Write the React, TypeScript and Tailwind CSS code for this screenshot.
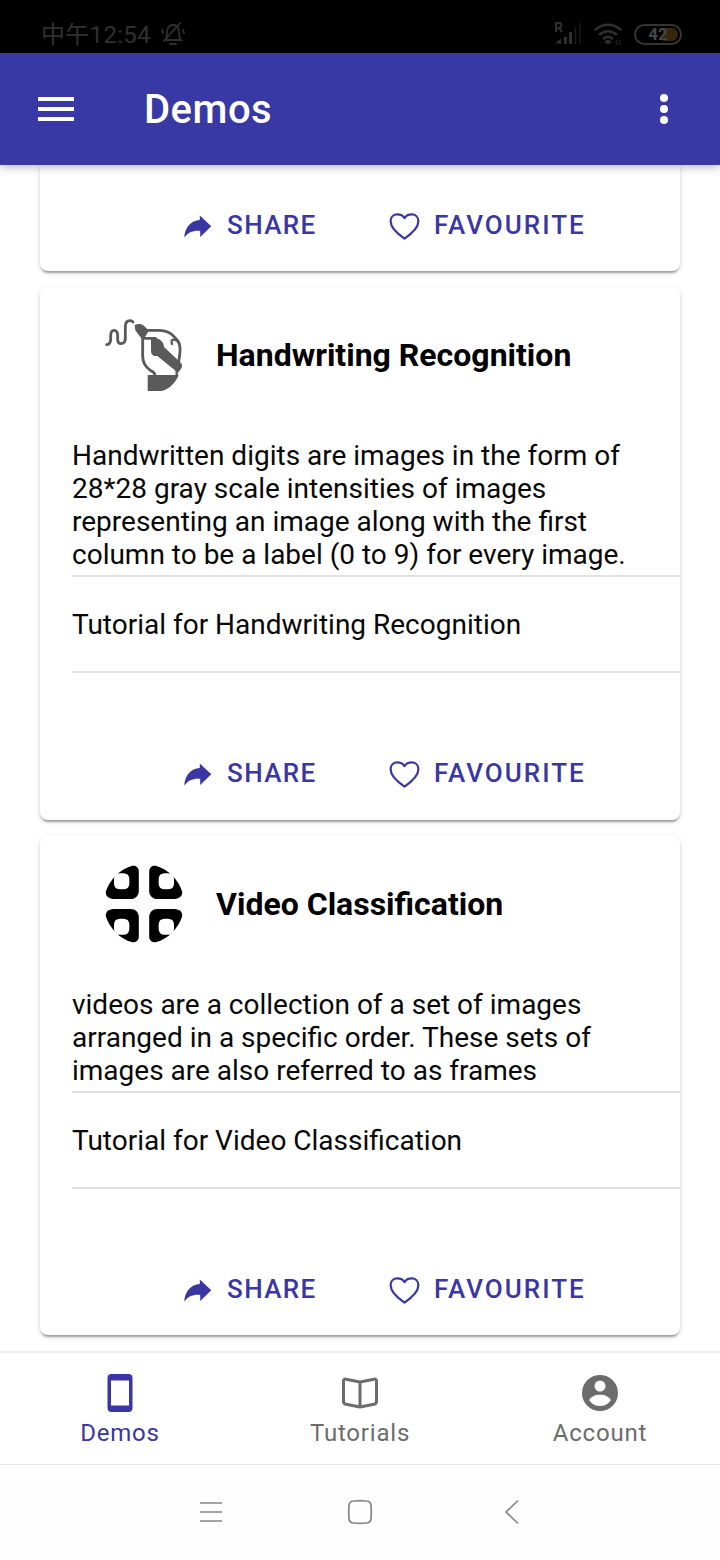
import type { ReactNode } from "react";

function ShareIcon() {
  return (
    <svg className="mt-px h-6 w-7 shrink-0" viewBox="0 0 28 24" fill="#3a36a4">
      <path d="M15.800 1.500 27.300 12.300 16.200 23v-6.200C9.500 16.200 4.300 18 .2 23.600 1 13.500 6.500 6.600 15.800 6z" />
    </svg>
  );
}

function HeartIcon() {
  return (
    <svg className="mt-px h-7 w-8 shrink-0" viewBox="0 0 32 28" fill="none" stroke="#3a36a4" strokeWidth="2.200" strokeLinejoin="round">
      <path d="M16.500 26.600C11.500 23.200 2.600 16.400 2.600 9.300 2.600 5 5.600 2.400 9.200 2.400c3.300 0 5.900 1.300 7.300 3.700C17.900 3.700 20.500 2.400 23.800 2.400c3.600 0 6.600 2.600 6.600 6.900 0 7.100-8.900 13.900-13.900 17.300z" />
    </svg>
  );
}

function Handwriting() {
  return (
    <svg className="size-20 shrink-0" viewBox="42 30 240 240" fill="none" stroke="#5a5a5a" strokeWidth="8.500" strokeLinecap="round" strokeLinejoin="round">
      <path d="M50 119c9-1 12-6 12-18v-8c0-11 3-17 10-17 9 0 11 6 11 17v10c0 9 4 13 10 13 9 0 13-5 13-16V65c0-13 5-18 14-18 5 0 7 1 9 4" />
      <path d="M134 60c9-5 19-4 26 1l11 10c6 5 5 8 1 14l-9 15c-4 3-9 0-12-4l-15-20z" fill="#5a5a5a" stroke="none" />
      <path d="M168 76h38c30 0 41 12 57 31 9 13 8 30 6 43l-4 26M158 93v61c0 20 7 31 24 43 9 4 13 7 13 16" />
      <path d="M160 100h36" />
      <path d="M183 103c7-3 20-4 27 1 7 5 12 12 12 22l48 45c7 6 8 12 4 19l-10 13-62-50c-12 2-19-5-19-16z" fill="#5a5a5a" stroke="none" />
      <path d="M265 110c-11-8-21-8-20 0 0 7 0 5 1 7" strokeWidth="7" />
      <path d="M173 210h93c-8 22-28 43-52 48h-41z" fill="#5a5a5a" stroke="none" />
      <path d="M260 190v20" strokeWidth="7" />
    </svg>
  );
}

function VideoPetals() {
  return (
    <svg className="size-20 shrink-0" viewBox="42 42 240 240">
      {["", "matrix(-1 0 0 1 324 0)", "matrix(1 0 0 -1 0 324)", "matrix(-1 0 0 -1 324 324)"].map((transform) => (
        <g key={transform} transform={transform}>
          <path d="M146.500 66v56c0 15-10 25-25 25H71c-17 0-26-11-23-23 10-34 44-68 77-76 13-3 21.500 4 21.500 18z" />
          <path d="M90 70h10q18 0 18 18v12q0 18-18 18H90q-18 0-18-18V88q0-18 18-18z" fill="#fff" />
        </g>
      ))}
    </svg>
  );
}

function CardActions() {
  return (
    <div className="flex h-7 items-center text-[26px] font-medium leading-7 text-[#3a36a4]">
      <div className="ml-36 flex w-[204px] items-center gap-[15px]">
        <ShareIcon />
        <span className="tracking-[1.4px]">SHARE</span>
      </div>
      <div className="flex items-center gap-[14px]">
        <HeartIcon />
        <span className="tracking-[2px]">FAVOURITE</span>
      </div>
    </div>
  );
}

const cardStyle =
  "mx-10 shrink-0 rounded-lg bg-white shadow-[0_4px_2px_-2px_rgba(0,0,0,0.2),0_2px_2px_0_rgba(0,0,0,0.14),0_2px_6px_0_rgba(0,0,0,0.12)]";

type DemoProps = { icon: ReactNode; title: string; lines: string[]; tutorial: string };

function DemoCard({ icon, title, lines, tutorial }: DemoProps) {
  return (
    <article className={`${cardStyle} pb-[33px] last:pb-8`}>
      <header className="flex h-[136px] items-center gap-8 pl-16">
        {icon}
        <h2 className="text-[32px] font-bold leading-10 text-black">{title}</h2>
      </header>
      <div className="pl-8 pt-4 text-[28px] leading-[33px] text-[#080808]">
        <div className="border-b-2 border-[#e1e1e1] pb-1">
          {lines.map((line) => (
            <p key={line} className="whitespace-nowrap">{line}</p>
          ))}
        </div>
        <div className="flex h-24 items-center border-b-2 border-[#e1e1e1]">{tutorial}</div>
      </div>
      <footer className="pt-[86px]">
        <CardActions />
      </footer>
    </article>
  );
}

function StatusBar() {
  return (
    <div className="flex h-[53px] shrink-0 items-center justify-between bg-black pl-[41px] pr-[38px] pt-[15px] text-[#303030]">
      <div className="flex items-center gap-[10px]">
        <span className="pt-0.5 font-['Roboto','Noto_Sans_CJK_SC',sans-serif] text-[24px] leading-8 tracking-[0.3px]">中午12:54</span>
        <svg className="size-6" viewBox="0 0 24 24" fill="none" stroke="currentColor" strokeWidth="1.800" strokeLinecap="round">
          <path d="M4 18h16c-2-2-2-4-2-7 0-5-2-8-6-8S6 6 6 11c0 3 0 5-2 7zM9 22h6M19 1 3 19M1 8l1 3M22 8l1 3" />
        </svg>
      </div>
      <div className="flex items-center">
        <svg className="h-6 w-7" viewBox="0 0 28 24" fill="none" stroke="currentColor">
          <path d="M2 10V1h3a2 2 0 0 1 0 5H2M5 6l3 4" strokeWidth="2" />
          <path d="M1 21.500h6v-5zM10 22V15h3v7zM15 22V10h3v12z" fill="currentColor" stroke="none" />
          <path d="M21.500 22V5M26 22V1" strokeWidth="1.500" opacity=".55" />
        </svg>
        <svg className="ml-3 h-6 w-7" viewBox="0 0 28 24" fill="none" stroke="currentColor" strokeWidth="2.600">
          <path d="M1 8c8-7 18-7 26 0M5 13c6-5 12-5 18 0M9 17c3-2.500 7-2.500 10 0" />
          <path d="m10.500 19.500 3.500 3 3.500-3c-2-2-5-2-7 0z" fill="currentColor" stroke="none" />
          <path d="M23 18v5M26 18v5" strokeWidth="1" />
        </svg>
        <div className="ml-3 flex h-[21px] w-12 items-center justify-center rounded-full border-2 border-[#343434] p-[2px]">
          <div className="flex h-full w-full items-center justify-center rounded-full bg-[linear-gradient(90deg,#000_62%,#37270d_62%)] text-[17px] font-bold leading-none text-[#464646]">
            42
          </div>
        </div>
      </div>
    </div>
  );
}

export default function App() {
  return (
    <div className="flex h-[1560px] w-[720px] flex-col overflow-hidden bg-white font-['Roboto',sans-serif]">
      <StatusBar />
      <header className="relative z-10 flex h-28 shrink-0 items-center bg-[#3839a4] pl-[38px] pr-[50px] text-white shadow-[0_4px_8px_-1px_rgba(0,0,0,0.16),0_2px_10px_rgba(0,0,0,0.1)]">
        <div className="flex w-9 flex-col gap-[6px]">
          <i className="h-1 bg-white" />
          <i className="h-1 bg-white" />
          <i className="h-1 bg-white" />
        </div>
        <h1 className="ml-[70px] pt-0.5 text-[40px] font-medium leading-12 tracking-[0.5px]">Demos</h1>
        <svg className="ml-auto h-8 w-3" viewBox="0 0 12 32" fill="#fff">
          <circle cx="6" cy="5" r="4" />
          <circle cx="6" cy="16" r="4" />
          <circle cx="6" cy="27" r="4" />
        </svg>
      </header>
      <main className="flex h-[1186px] shrink-0 flex-col gap-4 overflow-hidden">
        <article className={`${cardStyle} flex h-[106px] flex-col justify-end rounded-t-none pb-8`}>
          <CardActions />
        </article>
        <DemoCard
          icon={<Handwriting />}
          title="Handwriting Recognition"
          lines={[
            "Handwritten digits are images in the form of",
            "28*28 gray scale intensities of images",
            "representing an image along with the first",
            "column to be a label (0 to 9) for every image.",
          ]}
          tutorial="Tutorial for Handwriting Recognition"
        />
        <DemoCard
          icon={<VideoPetals />}
          title="Video Classification"
          lines={[
            "videos are a collection of a set of images",
            "arranged in a specific order. These sets of",
            "images are also referred to as frames",
          ]}
          tutorial="Tutorial for Video Classification"
        />
      </main>
      <nav className="grid h-[114px] shrink-0 grid-cols-3 border-b border-t-2 border-b-[#e8e8e8] border-t-[#eee] text-[24px] leading-7 tracking-[0.8px] text-[#6c6c6c]">
        <div className="flex flex-col items-center pt-5 text-[#3a36a4]">
          <svg className="h-10 w-7" viewBox="0 0 28 40" fill="currentColor" fillRule="evenodd">
            <path d="M5.500 1h17a4 4 0 0 1 4 4v30a4 4 0 0 1-4 4h-17a4 4 0 0 1-4-4V5a4 4 0 0 1 4-4zM5 7.500v25h18v-25z" />
          </svg>
          <span className="mt-1.5">Demos</span>
        </div>
        <div className="flex flex-col items-center pt-5">
          <svg className="h-10 w-10" viewBox="0 0 40 40" fill="none" stroke="currentColor" strokeWidth="3" strokeLinejoin="round">
            <path d="M20 9v25M20 9 6 6.200Q3.500 5.700 3.500 8v20.500q0 2.200 2.500 2.700l14 2.800 14-2.800q2.500-.5 2.500-2.700V8q0-2.300-2.500-1.800z" />
          </svg>
          <span className="mt-1.5">Tutorials</span>
        </div>
        <div className="flex flex-col items-center pt-5">
          <svg className="h-10 w-10" viewBox="0 0 40 40">
            <circle cx="20" cy="20" r="18" fill="currentColor" />
            <circle cx="20" cy="13" r="5.500" fill="#fff" />
            <path d="M9.200 27.200C12 19.800 28 19.800 30.800 27.200 26 35 14 35 9.200 27.200z" fill="#fff" />
          </svg>
          <span className="mt-1.5">Account</span>
        </div>
      </nav>
      <div className="flex flex-1 items-center justify-center bg-[#fefefe] pb-0.5">
        <svg className="h-8 w-80" viewBox="0 0 320 32" fill="none" stroke="#858585" strokeWidth="1.700">
          <path d="M0 7h22M0 16h22M0 25h22" />
          <path d="M149 10q0-5 5-5 6-.7 12 0 5 0 5 5 .7 6 0 12 0 5-5 5-6 .7-12 0-5 0-5-5-.7-6 0-12z" />
          <path d="m318 4.500-12 11.500 12 11.500" />
        </svg>
      </div>
    </div>
  );
}
